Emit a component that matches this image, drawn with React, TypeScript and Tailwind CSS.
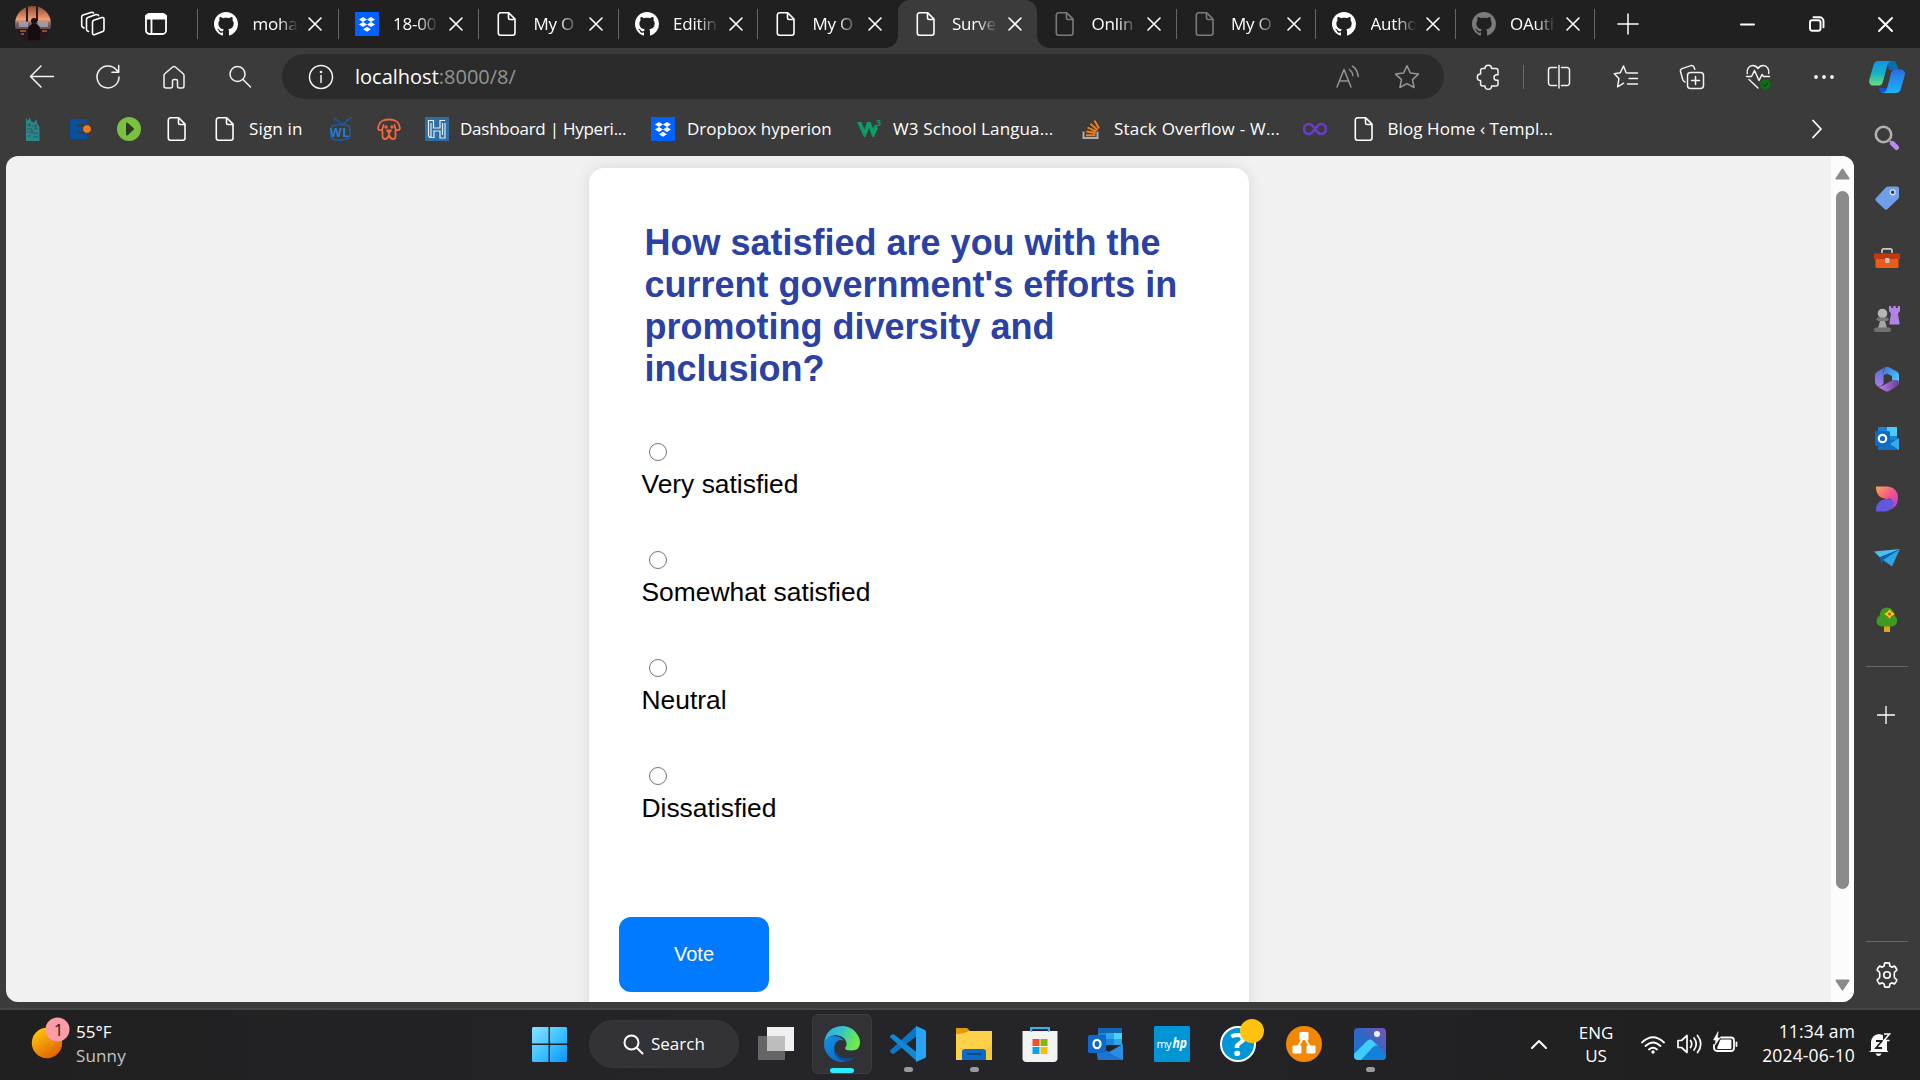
import React from "react";

const UI = "font-['Open_Sans','Noto_Sans',sans-serif]";

type SvgProps = { className?: string; children: React.ReactNode; box?: string; sw?: number };

function Line({ className = "", children, box = "0 0 24 24", sw = 1.5 }: SvgProps) {
  return (
    <svg viewBox={box} className={"block shrink-0 " + className} fill="none" stroke="currentColor" strokeWidth={sw} strokeLinecap="round" strokeLinejoin="round">
      {children}
    </svg>
  );
}

function Art({ className = "", children, box = "0 0 36 36" }: SvgProps) {
  return (
    <svg viewBox={box} className={"block shrink-0 " + className}>
      {children}
    </svg>
  );
}

function Github({ className = "" }: { className?: string }) {
  return (
    <svg viewBox="0 0 16 16" className={"block size-6 shrink-0 " + className} fill="currentColor">
      <path d="M8 0C3.58 0 0 3.58 0 8c0 3.54 2.29 6.53 5.47 7.59.4.07.55-.17.55-.38 0-.19-.01-.82-.01-1.49-2.01.37-2.53-.49-2.69-.94-.09-.23-.48-.94-.82-1.13-.28-.15-.68-.52-.01-.53.63-.01 1.08.58 1.23.82.72 1.21 1.87.87 2.33.66.07-.52.28-.87.51-1.07-1.78-.2-3.64-.89-3.64-3.95 0-.87.31-1.59.82-2.15-.08-.2-.36-1.02.08-2.12 0 0 .67-.21 2.2.82.64-.18 1.32-.27 2-.27.68 0 1.36.09 2 .27 1.53-1.04 2.2-.82 2.2-.82.44 1.1.16 1.92.08 2.12.51.56.82 1.27.82 2.15 0 3.07-1.87 3.75-3.65 3.95.29.25.54.73.54 1.48 0 1.07-.01 1.93-.01 2.2 0 .21.15.46.55.38A8.013 8.013 0 0016 8c0-4.42-3.58-8-8-8z" />
    </svg>
  );
}

function Dropbox() {
  return (
    <Art className="size-6" box="0 0 24 24">
      <rect width="24" height="24" fill="#0061fe" />
      <path fill="#fff" d="M8 5l4 2.5-4 2.5-4-2.5zM16 5l4 2.5-4 2.5-4-2.5zM8 10l4 2.5L8 15l-4-2.5zM16 10l4 2.5-4 2.5-4-2.5zM12 14.8l4 2.5-4 2.5-4-2.5z" />
    </Art>
  );
}

function Page({ className = "text-white" }: { className?: string }) {
  return (
    <Line className={"size-6 " + className} sw={1.6}>
      <path d="M5.500 .8h8.200l6.300 6.300v13.900a2.200 2.200 0 0 1-2.200 2.200H5.500a2.200 2.200 0 0 1-2.200-2.200V3a2.200 2.200 0 0 1 2.200-2.200zM13.500 1v4.900a1.600 1.600 0 0 0 1.600 1.600H20" />
    </Line>
  );
}

function Cross() {
  return (
    <Line className="size-[14px] text-white" box="0 0 14 14" sw={1.6}>
      <path d="M1 1l12 12M13 1L1 13" />
    </Line>
  );
}

type TabData = { icon: "gh" | "db" | "pg"; title: string; dim?: boolean; active?: boolean; noSep?: boolean; wide?: boolean };
const tabs: TabData[] = [
  { icon: "gh", title: "moha", wide: true },
  { icon: "db", title: "18-00", wide: true },
  { icon: "pg", title: "My O" },
  { icon: "gh", title: "Editin" },
  { icon: "pg", title: "My O", noSep: true },
  { icon: "pg", title: "Surve", active: true, noSep: true },
  { icon: "pg", title: "Onlin", dim: true },
  { icon: "pg", title: "My O", dim: true },
  { icon: "gh", title: "Autho" },
  { icon: "gh", title: "OAuth", dim: true },
];

function Tab({ t }: { t: TabData }) {
  return (
    <div className={"relative flex h-12 shrink-0 items-center " + (t.wide ? "w-[140.500px] " : "w-[139.5px] ") + (t.active ? "rounded-t-[12px] bg-[#3b3b3b]" : "")}>
      {t.active && (
        <>
          <div className="absolute bottom-0 -left-3 size-3 bg-[radial-gradient(circle_at_0_0,transparent_11.5px,#3b3b3b_12px)]" />
          <div className="absolute bottom-0 -right-3 size-3 bg-[radial-gradient(circle_at_100%_0,transparent_11.5px,#3b3b3b_12px)]" />
        </>
      )}
      <div className="ml-4 shrink-0">
        {t.icon === "gh" ? <Github className={t.dim ? "text-[#7b7b7b]" : "text-white"} /> : t.icon === "db" ? <Dropbox /> : <Page className={t.dim ? "text-[#7b7b7b]" : "text-white"} />}
      </div>
      <div className={"ml-[14.500px] w-[50px] shrink-0 text-[17px] leading-6 tracking-[-0.2px] whitespace-nowrap text-white [mask-image:linear-gradient(to_right,black_50%,transparent_91%)] " + UI}>{t.title}</div>
      <div className="ml-[5.500px]">
        <Cross />
      </div>
      {!t.noSep && <div className="ml-auto h-[30px] w-px bg-[#686868]" />}
    </div>
  );
}

function TabStrip() {
  return (
    <div className="flex h-12 shrink-0 items-center bg-[#202020]">
      <Art className="ml-[15px] size-9">
        <defs>
          <linearGradient id="sky" x1="0" y1="0" x2="0" y2="1">
            <stop offset="0" stopColor="#8f4a35" />
            <stop offset=".38" stopColor="#f5a070" />
            <stop offset=".48" stopColor="#7d6670" />
            <stop offset="1" stopColor="#231518" />
          </linearGradient>
          <clipPath id="av"><circle cx="18" cy="18" r="18" /></clipPath>
        </defs>
        <g clipPath="url(#av)">
          <rect width="36" height="36" fill="url(#sky)" />
          <path d="M11 0h2v16h-2zM21 0h2v15h-2zM0 23h36v13H0z" fill="#27161a" />
          <path d="M4 15.500h9v5.500H4zM23 15.500h10v5.500H23z" fill="#b0b4c4" opacity=".65" />
          <path d="M5 25h6M27 25h5M6 28h3" stroke="#b0623c" strokeWidth="1.500" />
          <circle cx="19" cy="15" r="3" fill="#140e12" />
          <path d="M13 34V22q2-4 6-4.500Q23.500 18 25 22v12z" fill="#140e12" />
        </g>
      </Art>
      <Line className="ml-[29px] size-[26px] text-white" box="0 0 26 26" sw={1.6}>
        <path d="M13.800 9.300l8-2.700q2.200-.6 2.200 1.500v10.300q0 1.500-1.300 2.100l-7.700 3q-2.500.8-2.500-1.500V11.300q0-1.500 1.300-2z" />
        <path d="M8.500 20.500l-1.200-.6a2 2 0 0 1-.8-1.800V8.500a2 2 0 0 1 1.300-1.900L16 3.600q2-.5 2.500 1M4 17l-1.500-1a2 2 0 0 1-.8-1.700V6a2 2 0 0 1 1.300-1.900L11 1.400q1.800-.5 2.500.6" />
      </Line>
      <Line className="ml-[39px] size-[22px] text-white" box="0 0 22 22" sw={1.8}>
        <rect x="1" y="1" width="20" height="20" rx="3.500" />
        <path d="M2 4h18" strokeWidth="5" />
        <path d="M6.500 6v15" />
      </Line>
      <div className="ml-[30px] h-[30px] w-px shrink-0 bg-[#686868]" />
      {tabs.map((t, i) => <Tab key={i} t={t} />)}
      <Line className="ml-[22px] size-[22px] text-white" box="0 0 22 22" sw={1.5}><path d="M11 1v20M1 11h20" /></Line>
      <Line className="ml-[101px] size-[15px] text-white" box="0 0 15 15" sw={2}><path d="M1 7.500h13" /></Line>
      <Line className="ml-[54px] size-4 text-white" box="0 0 16 16" sw={1.9}>
        <rect x="1" y="4.200" width="10.500" height="10.500" rx="2.200" />
        <path d="M4.500 1.200h6a4 4 0 0 1 4 4v6" />
      </Line>
      <Line className="ml-[53px] size-[15px] text-white" box="0 0 15 15" sw={1.9}><path d="M1 1l13 13M14 1L1 14" /></Line>
    </div>
  );
}

function Toolbar() {
  return (
    <div className="flex h-[57px] shrink-0 items-center text-[#f2f2f2]">
      <Line className="ml-[29px] size-[26px]" box="0 0 26 26"><path d="M24.500 12.500H2M12 2L1.500 12.500L12 23" /></Line>
      <Line className="ml-[40px] size-[26px]" box="0 0 26 26"><path d="M24 13a11 11 0 1 1-3-7.600l2.500 2.500M23.700 1.500v6.800h-6.800" /></Line>
      <Line className="ml-[40px] size-[26px]" box="0 0 26 26"><path d="M3 11.500q0-1 .8-1.700L11.600 3q1.400-1 2.800 0l7.800 6.800q.8.700.8 1.700V22a2 2 0 0 1-2 2h-2.500a2 2 0 0 1-2-2v-5a1.500 1.500 0 0 0-1.500-1.500h-2a1.500 1.500 0 0 0-1.500 1.500v5a2 2 0 0 1-2 2H5a2 2 0 0 1-2-2z" /></Line>
      <Line className="ml-[41px] size-6"><circle cx="9.500" cy="9" r="7.500" /><path d="M15 14.500l7.500 7.500" /></Line>
      <div className="ml-[30px] flex h-[45px] w-[1162px] shrink-0 items-center rounded-full bg-[#2b2b2b]">
        <Line className="ml-[26px] size-[26px]" box="0 0 26 26"><circle cx="13" cy="13" r="11.500" /><path d="M13 11.500v7" /><circle cx="13" cy="8" r=".6" fill="currentColor" /></Line>
        <div className={"ml-[21px] text-[20px] leading-6 whitespace-nowrap text-white " + UI}>localhost<span className="text-[#949494]">:8000/8/</span></div>
        <div className="ml-auto flex items-center text-[#969696]">
          <Line className="size-[26px]" box="0 0 26 26"><path d="M2 23L9 5.500L16 23M4.500 17h9M14.500 5.500q3 2.500 3.400 6M17.500 2.200q5 3.500 5.700 10.300" /></Line>
          <Line className="mr-[24px] ml-[33px] size-[26px]" box="0 0 26 26"><path d="M13 1.800l3.400 7.300 8 1-5.900 5.500 1.600 7.900L13 19.600l-7.100 3.900 1.600-7.900-5.900-5.500 8-1z" /></Line>
        </div>
      </div>
      <Line className="ml-[32px] size-[26px]" box="0 0 26 26"><path d="M9 4.500a3.300 3.300 0 0 1 6.600 0H20a2 2 0 0 1 2 2v4.200h-1.200a2.800 2.800 0 0 0 0 5.600H22V20a2 2 0 0 1-2 2h-4.400a3.300 3.300 0 0 1-6.600 0H6.600a2 2 0 0 1-2-2v-3.500a3.300 3.300 0 0 1 0-6.600V6.500a2 2 0 0 1 2-2z" /></Line>
      <div className="ml-[21px] h-6 w-px bg-[#6a6a6a]" />
      <Line className="ml-[22px] size-[26px]" box="0 0 26 26"><path d="M10.500 3.500H5a2.500 2.500 0 0 0-2.500 2.500v13A2.500 2.500 0 0 0 5 21.500h5.500M15.500 3.500H21A2.500 2.500 0 0 1 23.500 6v13a2.500 2.500 0 0 1-2.500 2.500h-5.500M13 1.500v22.500" /></Line>
      <Line className="ml-[41px] size-[26px]" box="0 0 26 26"><path d="M15.500 9l-2.400-.3L10.500 2 7.300 8.700l-6 1 4.600 4.700-1.300 8.400 6-3.600M15 9h9.500M16 14.500h8.500M14.500 20h10" /></Line>
      <Line className="ml-[40px] size-[26px]" box="0 0 26 26"><rect x="8.500" y="8.500" width="16" height="16" rx="3" /><path d="M16.500 12.500v8M12.500 16.500h8M6 18l-1-.7q-.8-.5-1.200-1.500L1.500 7.500Q1 5.500 3 4.600l9-3q2-.4 3 1.400l.8 2.300" /></Line>
      <Line className="ml-[40px] size-[28px]" box="0 0 28 28">
        <path d="M2.300 10.500C1.500 6 4 2.500 7.800 2.500c3 0 4.200 1.500 5.200 3 1-1.500 2.200-3 5.200-3C22 2.500 24.500 6 23.700 10.500M4 16.500l9 8.500M1.500 13.500h5l3-6 4.500 10 3-6 1.500 2h6" />
        <circle cx="20.500" cy="21.500" r="5.300" fill="#0f6d12" stroke="none" />
        <path d="M18.300 21.700l1.600 1.600 2.900-3" stroke="#123" strokeWidth="1" />
      </Line>
      <Line className="ml-[40px] size-[22px]" box="0 0 22 22"><g fill="currentColor" stroke="none"><circle cx="3" cy="11" r="1.900" /><circle cx="11" cy="11" r="1.900" /><circle cx="19" cy="11" r="1.900" /></g></Line>
      <Art className="ml-[34px] size-9">
        <defs>
          <linearGradient id="cp1" x1="0" y1="0" x2="0" y2="1"><stop offset="0" stopColor="#1095e8" /><stop offset=".5" stopColor="#16b0c8" /><stop offset="1" stopColor="#6bde78" /></linearGradient>
          <linearGradient id="cp2" x1="0" y1="0" x2="0" y2="1"><stop offset="0" stopColor="#2b6cdf" /><stop offset="1" stopColor="#1ab5ff" /></linearGradient>
        </defs>
        <path d="M10 29h10l4-18 5-.5L22 34H13q-3-1-3-5z" fill="#1551d8" />
        <path d="M18 2h7q2 0 3 4l1.500 5H20z" fill="#0a6cb0" />
        <path d="M9 2h13q-3 1-4 5.500l-4 15q-1 4-4 4H4q-5-.5-3.500-6.500L4.500 6Q5.800 2 9 2z" fill="url(#cp1)" />
        <path d="M22 10.500h10q5 1 3.700 6L32 29.500q-1 4.500-5.500 4.500H13q4-.5 5-4.500l4-15q1-4 4-4z" fill="url(#cp2)" />
      </Art>
    </div>
  );
}

const bm = "text-[17px] leading-6 whitespace-nowrap text-white shrink-0 " + UI;

function Bookmarks() {
  return (
    <div className="flex h-[51px] shrink-0 items-center pb-[4px]">
      <Art className="ml-[21px] size-6" box="0 0 24 24">
        <path d="M5 1l2 3 1.500-4L10 4l3 2 2-4 1.500 5 2 3v14H5z" fill="#27898c" />
        <path d="M6 8h3M11 9h4M6 12h5M13 12h4M6 15h4M12 16h5M7 19h3M12 20h5M9 6v4M15 7v5M11 12v5" stroke="#3b5456" strokeWidth="1.200" />
      </Art>
      <Art className="ml-[24px] size-6" box="0 0 24 24">
        <path d="M1 2h17v5H9v2.500h7v5H9V17h9v5H1z" fill="#0a4f9c" />
        <circle cx="18" cy="12" r="4.300" fill="#f47a20" stroke="#3b3b3b" strokeWidth=".8" />
      </Art>
      <Art className="ml-[24px] size-6" box="0 0 24 24">
        <circle cx="12" cy="12" r="12" fill="#7ac142" />
        <path d="M10 6.500L16 12L10 17.500z" fill="#2d3b22" stroke="#2d3b22" strokeWidth="2" strokeLinejoin="round" />
      </Art>
      <div className="ml-[24px]"><Page /></div>
      <div className="ml-[24px]"><Page /></div>
      <div className={"ml-[12px] w-[54px] tracking-[0.15px] " + bm}>Sign in</div>
      <Art className="ml-[26px] size-6" box="0 0 24 24">
        <path d="M13 7L5 1M14 7l9-7M15 7l4-5" stroke="#1b5fa8" strokeWidth="1.200" />
        <path d="M3 9q9-3 17 0 2 6 0 12-8 4-17 1-3-6 0-13z" fill="none" stroke="#1b5fa8" strokeWidth="1.500" />
        <text x="1" y="20" fontSize="12" fontWeight="700" fontFamily="Open Sans, sans-serif" fill="#2a7bd0" textLength="19">WL</text>
      </Art>
      <Line className="ml-[24px] size-6 text-[#f0683f]" sw={1.8}>
        <path d="M6 3.500q6-2 12 0 4 1.500 5 8-.5 2-3.500 1.500-1.500-1-2-5M6 3.500q-4 1.500-5 8 .5 2 3.500 1.500 1.500-1 2-5M5.500 13.500v6q0 2.500 2.500 2.500t3-2.500M18.500 13.500v6q0 2.500-2.500 2.500t-3-2.500M12 15v5" />
        <circle cx="9" cy="10" r=".8" fill="currentColor" /><circle cx="15" cy="10" r=".8" fill="currentColor" />
        <path d="M10 13.500h4L12 16z" fill="currentColor" />
      </Line>
      <Art className="ml-[24px] size-6" box="0 0 24 24">
        <rect width="24" height="24" fill="#2f6ea3" />
        <path d="M3.500 18V3.500h5V11H15V3.500h5M6 20.500V6M3.500 18q0 2.500 2.500 2.500h3V14h6v7h5V6M17.500 6v12" fill="none" stroke="#dfeaf3" strokeWidth="1.200" />
      </Art>
      <div className={"ml-[11px] w-[166px] tracking-[-0.25px] " + bm}>Dashboard | Hyperi...</div>
      <div className="ml-[25px]"><Dropbox /></div>
      <div className={"ml-[12px] w-[145px] " + bm}>Dropbox hyperion</div>
      <Art className="ml-[25px] size-6" box="0 0 24 24">
        <path d="M0 5h4.500l3 7.500L10 5h3.500l2.500 6.500 1.500-3.500h1.500l2 3-4 9h-1.500L12 11l-3.500 9H7z" fill="#0c9d67" />
        <text x="19" y="8.500" fontSize="9" fontWeight="700" fontFamily="Open Sans, sans-serif" fill="#0c9d67">3</text>
      </Art>
      <div className={"ml-[12px] w-[161px] tracking-[0.12px] " + bm}>W3 School Langua...</div>
      <Art className="ml-[25px] size-6" box="0 0 24 24">
        <path d="M4.500 14.500v6.500h14v-6.500" fill="none" stroke="#a9adb1" strokeWidth="2" />
        <path d="M7 18.300h9.500M7.300 14.500l9.300 1.500M8.500 10.500l8.700 3.800M11.500 6.800l7 6.200M15.500 3.500l4.500 8" stroke="#f0801f" strokeWidth="1.900" />
      </Art>
      <div className={"ml-[11px] w-[166px] tracking-[0.22px] " + bm}>Stack Overflow - W...</div>
      <Line className="ml-[23px] size-6 text-[#6a3cc7]" sw={2.700}><path d="M12 12C9 7.500 7.500 7 6 7a5 5 0 0 0 0 10c2.500 0 4-2.500 6-5s3.500-5 6-5a5 5 0 0 1 0 10c-1.500 0-3-.5-6-5z" /></Line>
      <div className="ml-[25px]"><Page /></div>
      <div className={"ml-[11.500px] w-[165px] tracking-[0.08px] " + bm}>Blog Home ‹ Templ...</div>
      <Line className="ml-[258px] h-[20px] w-[12px] text-white" box="0 0 12 20" sw={1.800}><path d="M2 1.500L10 10L2 18.500" /></Line>
    </div>
  );
}

const options = ["Very satisfied", "Somewhat satisfied", "Neutral", "Dissatisfied"];

function Survey() {
  return (
    <div className="flex min-h-0 flex-1 overflow-hidden rounded-[12px] bg-[#f1f1f1] font-['Liberation_Sans',Arial,sans-serif]">
      <div className="flex min-w-0 flex-1 justify-start pt-3 pl-[583px]">
        <div className="h-[900px] w-[660px] rounded-[15px] bg-white shadow-[0_0_15px_rgba(0,0,0,0.1)]">
          <h1 className="ml-[55.500px] w-[550px] pt-[54px] text-[36px] leading-[42px] font-bold text-[#2b41a3]">How satisfied are you with the current government's efforts in promoting diversity and inclusion?</h1>
          <div className="mt-[53px] ml-[52.500px]">
            {options.map((o) => (
              <div key={o} className="h-[108px]">
                <div className="ml-[7px] size-[18px] rounded-full border-[1.500px] border-[#767676] bg-white" />
                <div className="mt-[6px] text-[26.400px] leading-[34px] text-black">{o}</div>
              </div>
            ))}
          </div>
          <div className="mt-[42px] ml-[30px] flex h-[75px] w-[150px] items-center justify-center rounded-[12px] bg-[#007bff] pb-[2px] text-[20px] text-white">Vote</div>
        </div>
      </div>
      <div className="flex w-[23px] shrink-0 flex-col items-center bg-[#fcfcfc]">
        <Art className="mt-3 h-3 w-[15px]" box="0 0 15 12"><path d="M7.500 1.500L13.500 10.500H1.500z" fill="#8b8b8b" stroke="#8b8b8b" strokeWidth="2" strokeLinejoin="round" /></Art>
        <div className="mt-[11px] h-[698px] w-[13px] rounded-full bg-[#8b8b8b]" />
        <Art className="mt-[90px] h-3 w-[15px]" box="0 0 15 12"><path d="M7.500 10.500L13.500 1.500H1.500z" fill="#8b8b8b" stroke="#8b8b8b" strokeWidth="2" strokeLinejoin="round" /></Art>
      </div>
    </div>
  );
}

function Sidebar() {
  return (
    <div className="flex w-[66px] shrink-0 flex-col items-center">
      <div className="-mt-[31px] flex flex-col items-center gap-[34.200px]">
        <Art className="size-[26px]" box="0 0 26 26">
          <circle cx="9.500" cy="9.500" r="7.700" fill="none" stroke="#b3b0ae" strokeWidth="2.600" />
          <path d="M14.500 15l2.500 2" stroke="#999" strokeWidth="2" />
          <path d="M18.500 18.500l4 4" stroke="#b98af0" strokeWidth="5" strokeLinecap="round" />
        </Art>
        <Art className="size-[26px]" box="0 0 26 26">
          <path d="M14 1.500h9q2 0 2 2v8.500q0 1-.7 1.700L13.500 24q-1.500 1.300-3 0L2 16q-1.500-1.500 0-3L12 2.300q.8-.8 2-.8z" fill="#6f9eea" />
          <circle cx="18.700" cy="7.300" r="2.400" fill="#333" stroke="#d5e2f7" strokeWidth="1.400" />
        </Art>
        <Art className="size-[26px]" box="0 0 26 26">
          <path d="M8 8V5.500q0-1.700 1.700-1.700h6.600q1.700 0 1.700 1.700V8" fill="none" stroke="#c9c9c9" strokeWidth="1.700" />
          <path d="M0 8.500h26v5.500H0z" fill="#c13a0e" />
          <path d="M1.500 14h23v7.500q0 1.500-1.500 1.500H3q-1.500 0-1.500-1.500z" fill="#ee5a1c" />
          <rect x="11" y="13" width="4.500" height="5" rx="1.200" fill="#c8c2be" />
        </Art>
        <Art className="size-[26px]" box="0 0 26 26">
          <path d="M15 0h2.200v2h2V-.5h2.600V2h2V0H26v5l-2 2.500L25.500 17v1.500H15.500V17L17 7.500 15 5z" fill="#b183e8" />
          <circle cx="8.500" cy="7.500" r="4.800" fill="#b5b5b5" />
          <rect x="2.500" y="11.500" width="12" height="3.500" rx="1.700" fill="#777" />
          <path d="M6 15h5l2 7H4z" fill="#a5a5a5" />
          <rect x="0" y="21.500" width="17" height="4.500" rx="2" fill="#707070" />
        </Art>
        <Art className="size-[26px]" box="0 0 26 26">
          <defs>
            <linearGradient id="m1" x1="0" y1="0" x2="1" y2="1"><stop offset="0" stopColor="#3a6fe0" /><stop offset="1" stopColor="#4fdcff" /></linearGradient>
            <linearGradient id="m2" x1="0" y1="0" x2="0" y2="1"><stop offset="0" stopColor="#4f6fd8" /><stop offset="1" stopColor="#a97be6" /></linearGradient>
            <linearGradient id="m3" x1="0" y1="0" x2="1" y2="0"><stop offset="0" stopColor="#c58df0" /><stop offset="1" stopColor="#6a3a9c" /></linearGradient>
          </defs>
          <path d="M11 1.200q2-1 4 0l8 4.500q2 1.200 2 3.300v9l-7-4V10l-5-2.500-4 2z" fill="url(#m1)" />
          <path d="M12 .8Q9.500 2 9.500 5v12.500L7 20q-3.500 1.200-5-1.500-1-1-1-2.500V9q0-2 2-3.300z" fill="url(#m2)" />
          <path d="M25 15q0 4-2 5.200l-8 4.700q-2 1-4 0L3 20.300q3.500 1 6.500-1L18 14.500q4-1 7 .5z" fill="url(#m3)" />
        </Art>
        <Art className="size-[26px]" box="0 0 26 26">
          <path d="M4 1h19v19H4z" fill="#1585d8" /><path d="M13 1h10v9H13z" fill="#4cc9ff" />
          <path d="M4 14h21v10H4z" fill="#1170c2" /><path d="M25 12v12l-9-6z" fill="#36a9ee" />
          <rect x="1" y="5" width="15" height="15" rx="1.500" fill="#0a6ac7" />
          <circle cx="8.500" cy="12.500" r="3.700" fill="none" stroke="#fff" strokeWidth="2.200" />
        </Art>
        <Art className="size-[26px]" box="0 0 26 26">
          <defs><linearGradient id="ds" x1="0" y1="0" x2="1" y2="1"><stop offset="0" stopColor="#ffa45c" /><stop offset=".5" stopColor="#f0548c" /><stop offset="1" stopColor="#a838f5" /></linearGradient></defs>
          <path d="M2 .5h12Q24 2 24 12t-10 12q4-3 4-8t-5-3Q2 12 2 2z" fill="url(#ds)" />
          <path d="M2 25.500v-3Q3 14 12 13q8 0 8 4-1 7-8 8.500z" fill="#6259df" />
        </Art>
        <Art className="size-[26px]" box="0 0 26 26">
          <path d="M0 5.500L26 3 6.500 12z" fill="#4bbdf5" /><path d="M6 11L26 3 9.500 14.500 7.500 19z" fill="#0b62a9" /><path d="M9 14L26 3l-8 17.500z" fill="#2ea3e8" />
        </Art>
        <Art className="size-[26px]" box="0 0 26 26">
          <path d="M10 17h6v8h-6z" fill="#e9a013" />
          <path d="M13 .5q7 .5 7.500 8 3.500 3 2.500 7-1.500 4-6 4H8q-5-.5-5.500-5 0-4 3-6Q6.500.5 13 .5z" fill="#3f9a1f" />
          <path d="M15.500 3.500l1.500 2 2.500 1.500-2.500 1.500-1.500 2-1.500-2L11.500 7 14 5.500z" fill="#fbc31a" stroke="#fbc31a" strokeWidth="1.500" /><circle cx="15.500" cy="7" r="1.500" fill="#d8401f" />
        </Art>
      </div>
      <div className="mt-[33px] h-px w-[42px] shrink-0 bg-[#666]" />
      <Line className="mt-[39px] mr-[2px] size-[18px] text-white" box="0 0 18 18" sw={1.300}><path d="M9 0v18M0 9h18" /></Line>
      <div className="mt-auto h-px w-[42px] shrink-0 bg-[#666]" />
      <Line className="mt-[18px] mb-3 size-[30px] text-white" box="0 0 24 24" sw={1.300}>
        <path d="M9.700 4.800l.4-2.300q1.900-.5 3.800 0l.4 2.300 1.500.9 2.200-.8q1.400 1.400 1.900 3.200L18.100 9.600q-.3.600-.3 2.400t.3 2.400l1.800 1.500q-.5 1.800-1.900 3.200l-2.200-.8-1.500.9-.4 2.300q-1.900.5-3.800 0l-.4-2.300-1.500-.9-2.200.8q-1.400-1.400-1.900-3.200l1.800-1.500q.3-.6.3-2.400t-.3-2.400L4.100 8.100q.5-1.800 1.900-3.200l2.200.8z" />
        <circle cx="12" cy="12" r="2.600" />
      </Line>
    </div>
  );
}

function Slot({ children, dot, active }: { children: React.ReactNode; dot?: boolean; active?: boolean }) {
  return (
    <div className={"relative mr-[6px] flex h-[60px] w-[60px] shrink-0 items-center justify-center rounded-[6px] " + (active ? "border border-[#3d3d41] bg-[#323236]" : "")}>
      {children}
      {dot && <div className="absolute bottom-[2px] h-[5px] w-[9px] rounded-full bg-[#9b9b9d]" />}
      {active && <div className="absolute bottom-0 h-[5px] w-6 rounded-full bg-[#2cecff]" />}
    </div>
  );
}

function Taskbar() {
  return (
    <div className="flex h-[70px] shrink-0 items-center bg-[linear-gradient(90deg,#202020_0,#222224_15%,#242429_35%,#242429_60%,#202020_88%)] pb-[2px]">
      <Art className="-mt-[2px] ml-[30px] size-[42px] overflow-visible" box="0 0 42 42">
        <defs><linearGradient id="sun" x1=".1" y1="0" x2=".8" y2="1"><stop offset="0" stopColor="#ffcf0a" /><stop offset="1" stopColor="#e05a00" /></linearGradient></defs>
        <circle cx="17" cy="21" r="15.200" fill="url(#sun)" />
        <circle cx="27.500" cy="7.500" r="12" fill="#fb9ca8" />
        <text x="28.500" y="13.500" fontSize="17" textAnchor="middle" fontFamily="Open Sans, sans-serif" fill="#222">1</text>
      </Art>
      <div className={"ml-[4px] w-[100px] text-[17px] leading-6 " + UI}>
        <div className="text-white">55°F</div>
        <div className="tracking-[0.15px] text-[#c4c4c4]">Sunny</div>
      </div>
      <Art className="mt-[1px] ml-[356px] size-[35px]">
        <defs><linearGradient id="win" gradientUnits="userSpaceOnUse" x1="0" y1="0" x2="36" y2="36"><stop offset="0" stopColor="#8ae2ff" /><stop offset=".5" stopColor="#3fc4ff" /><stop offset="1" stopColor="#0a94ff" /></linearGradient></defs>
        <path d="M1 0h16v17H0V1zM18.500 0H35l1 1v16H18.500zM0 18.500h17V36H1l-1-1zM18.500 18.500H36V35l-1 1H18.500z" fill="url(#win)" />
      </Art>
      <div className="ml-[22px] flex h-12 w-[150px] shrink-0 items-center rounded-full border border-[#38383c] bg-[#323237]">
        <Line className="ml-[33px] size-[21px] text-white" box="0 0 21 21" sw={2}><circle cx="8.500" cy="8.500" r="7" /><path d="M14 14l5.500 5.500" /></Line>
        <div className={"ml-[7px] text-[17px] leading-6 text-white " + UI}>Search</div>
      </div>
      <div className="ml-[7px] flex">
        <Slot>
          <Art className="size-9"><path d="M0 10h27v24H0z" fill="#656565" /><path d="M9 1h27v24H9z" fill="#f0f0f0" /><path d="M9 10h18v15H9z" fill="#bdbdbd" /></Art>
        </Slot>
        <Slot active>
          <Art className="size-9">
            <defs>
              <linearGradient id="e1" x1="0" y1="0" x2="1" y2=".3"><stop offset="0" stopColor="#2aa9e8" /><stop offset=".5" stopColor="#35c4c8" /><stop offset="1" stopColor="#6fea4a" /></linearGradient>
              <linearGradient id="e2" x1="0" y1="0" x2=".6" y2="1"><stop offset="0" stopColor="#1390e0" /><stop offset="1" stopColor="#0c6fd0" /></linearGradient>
            </defs>
            <path d="M12 14q-4 9 2 15 6 6 17 2l2.500-2.500Q29 36 18 36 9 35 6 27z" fill="#0d4f9e" />
            <path d="M0 18Q1 11 9 10q8 0 11 5-6-3-9.500 4Q8 28 15 33q4 2.500 6 2.800Q13 37 6.500 31.500 0 26 0 18z" fill="url(#e2)" />
            <path d="M0 17Q2 1 18 0q8 0 13 5.500t5 11q0 8-9 8-6 0-6-2.500 2-1.500 1.500-5Q21 10 12 9 3 9.500 0 17z" fill="url(#e1)" />
          </Art>
        </Slot>
        <Slot dot>
          <Art className="size-9"><path d="M0 24.500L26 .5v10L4 27.800q-1.500.7-2.500-.5L.3 26q-.7-.8-.3-1.500z" fill="#0a76c4" /><path d="M.3 11.500Q-.3 10.500.5 9.800L2 8.500q1-.7 2.500.2L27 26.500v9z" fill="#1287d6" /><path d="M26 0l9 4q1 .5 1 1.500v25q0 1-1 1.500l-9 4z" fill="#29a4f2" /></Art>
        </Slot>
        <Slot dot>
          <Art className="size-9"><path d="M0 2h11l4 4v8H0z" fill="#dd9d0b" /><path d="M0 8q8 0 13-3h23v29H0z" fill="#ffd04a" /><path d="M36 18v16H18z" fill="#fdc22e" opacity=".6" /><path d="M6 34V26q0-3 3-3h18q3 0 3 3v8z" fill="#0c6bc3" /><path d="M11 28h14" stroke="#073f7c" strokeWidth="1.500" /></Art>
        </Slot>
        <Slot>
          <Art className="size-9"><path d="M9 8V2h18v6" fill="none" stroke="#35b1ef" strokeWidth="2" /><path d="M.5 5h35v27q0 4-4 4h-27q-4 0-4-4z" fill="#f3f3f3" /><path d="M9.500 6V2h17v4" fill="none" stroke="#35b1ef" strokeWidth="1.600" /><path d="M10.500 13h7v7h-7z" fill="#f25022" /><path d="M18.500 13h7v7h-7z" fill="#7fba00" /><path d="M10.500 21h7v7h-7z" fill="#00a4ef" /><path d="M18.500 21h7v7h-7z" fill="#ffb900" /></Art>
        </Slot>
        <Slot>
          <Art className="size-9"><path d="M10 2h24v17H10z" fill="#1565b5" /><path d="M10 7h16v12H10z" fill="#1a86d8" /><path d="M18 7h8v6h-8zM26 13h8v6h-8z" fill="#2ba6ea" /><path d="M26 7h8v6h-8z" fill="#4ed0fc" /><path d="M8 20l13 6 14-8v16H10z" fill="#2a8fe4" /><path d="M8 20l27 14H10z" fill="#1c74d0" /><rect x="0" y="9" width="18" height="18" rx="1.500" fill="#0f68cd" /><ellipse cx="9" cy="18" rx="3.500" ry="4.200" fill="none" stroke="#fff" strokeWidth="2.200" /></Art>
        </Slot>
        <Slot>
          <Art className="size-9"><rect width="36" height="36" rx="1.500" fill="#0096d6" /><text x="2.500" y="21.500" fontSize="11" fontFamily="Open Sans, sans-serif" fill="#fff" textLength="15">my</text><text x="18.500" y="22" fontSize="15" fontStyle="italic" fontWeight="700" fontFamily="Open Sans, sans-serif" fill="#fff" textLength="14.500" lengthAdjust="spacingAndGlyphs">hp</text></Art>
        </Slot>
        <Slot>
          <Art className="size-9 overflow-visible"><circle cx="18" cy="18" r="17" fill="#0096d6" stroke="#fff" strokeWidth="2" /><text x="18" y="29.500" fontSize="33" fontWeight="700" textAnchor="middle" fontFamily="Open Sans, sans-serif" fill="#fff">?</text><circle cx="32" cy="5" r="12" fill="#ffc20e" /></Art>
        </Slot>
        <Slot>
          <Art className="size-9"><circle cx="18" cy="18" r="18" fill="#f08705" /><path d="M18 10L11 23M18 10l7 13" stroke="#fff" strokeWidth="2" /><rect x="13.500" y="6" width="9" height="8" rx="1" fill="#fff" /><rect x="6.500" y="19.500" width="9" height="8" rx="1" fill="#fff" /><rect x="20.500" y="19.500" width="9" height="8" rx="1" fill="#fff" /></Art>
        </Slot>
        <Slot dot>
          <Art className="size-9"><defs><linearGradient id="ph" x1="0" y1="1" x2="1" y2="0"><stop offset="0" stopColor="#1a79d8" /><stop offset=".5" stopColor="#2b68c6" /><stop offset="1" stopColor="#7b55b4" /></linearGradient></defs><rect x="2" y="2" width="32" height="32" rx="4" fill="url(#ph)" /><path d="M2 28l13-13q3-3 6 0l5 5L10 34H6q-4 0-4-4z" fill="#41cdfa" /><path d="M9 34l12-13q3-3 6 0l7 7.500V30q0 4-4 4z" fill="#1480d8" /><circle cx="25" cy="8" r="3" fill="#f2f2f2" /></Art>
        </Slot>
      </div>
      <Line className="ml-[124px] h-[10px] w-[18px] text-white" box="0 0 18 10" sw={2}><path d="M2 9l7-7 7 7" /></Line>
      <div className={"ml-[23px] w-[50px] text-center text-[17px] leading-[23px] text-white " + UI}>ENG<br />US</div>
      <Line className="ml-[19px] size-[26px] text-white" box="0 0 26 26" sw={1.800}><path d="M2 11.500q11-10.500 22 0M5.500 15q7.500-7 15 0M9 18.500q4-3.500 8 0" /><circle cx="13" cy="21" r="1.700" fill="currentColor" stroke="none" /></Line>
      <Line className="ml-[10px] size-[26px] text-white" box="0 0 26 26" sw={1.700}><path d="M2 9.500h3.500L11 4.500v17l-5.500-5H2zM14.500 9.500q2.500 3.500 0 7M18 7q4.500 6 0 12M21.500 4.500q6.500 8.500 0 17" /></Line>
      <Line className="ml-[10px] size-[26px] text-white" box="0 0 26 26" sw={1.800}><path d="M9 6.500h10a3 3 0 0 1 3 3v7.500a3 3 0 0 1-3 3H5a3 3 0 0 1-3-3v-3M24.500 11.500v3.500" /><path d="M9 9.500h9.500v7.500H6z" fill="currentColor" /><path d="M6 1L1.500 9H4l-1 5 5-7H5.500z" fill="currentColor" strokeWidth=".6" /></Line>
      <div className={"ml-[17px] w-[100px] pb-[2px] text-right text-[17.500px] leading-6 tracking-[0.15px] whitespace-nowrap text-white " + UI}>11:34 am<br />2024-06-10</div>
      <Art className="ml-[13px] size-[24px]" box="0 0 24 24">
        <path d="M3 18.500V10q1-7.500 8-8 7 .5 8 8v8.500l1.500 1.500H1zM7.500 21.500h6q-1 2.500-3 2.500t-3-2.500z" fill="#fff" />
        <path d="M8 9h6l-6 7h6" fill="none" stroke="#202020" strokeWidth="1.800" />
        <path d="M15 0h9v9h-9z" fill="#202020" /><path d="M16 2h5.500L16 8.500h5.500" fill="none" stroke="#fff" strokeWidth="1.600" />
      </Art>
    </div>
  );
}

export default function App() {
  return (
    <div className="flex h-[1080px] w-[1920px] flex-col overflow-hidden bg-[#3b3b3b]">
      <TabStrip />
      <Toolbar />
      <Bookmarks />
      <div className="flex h-[846px] shrink-0 pl-[6px]">
        <Survey />
        <Sidebar />
      </div>
      <div className="h-2 shrink-0 border-b-2 border-[#454545]" />
      <Taskbar />
    </div>
  );
}
